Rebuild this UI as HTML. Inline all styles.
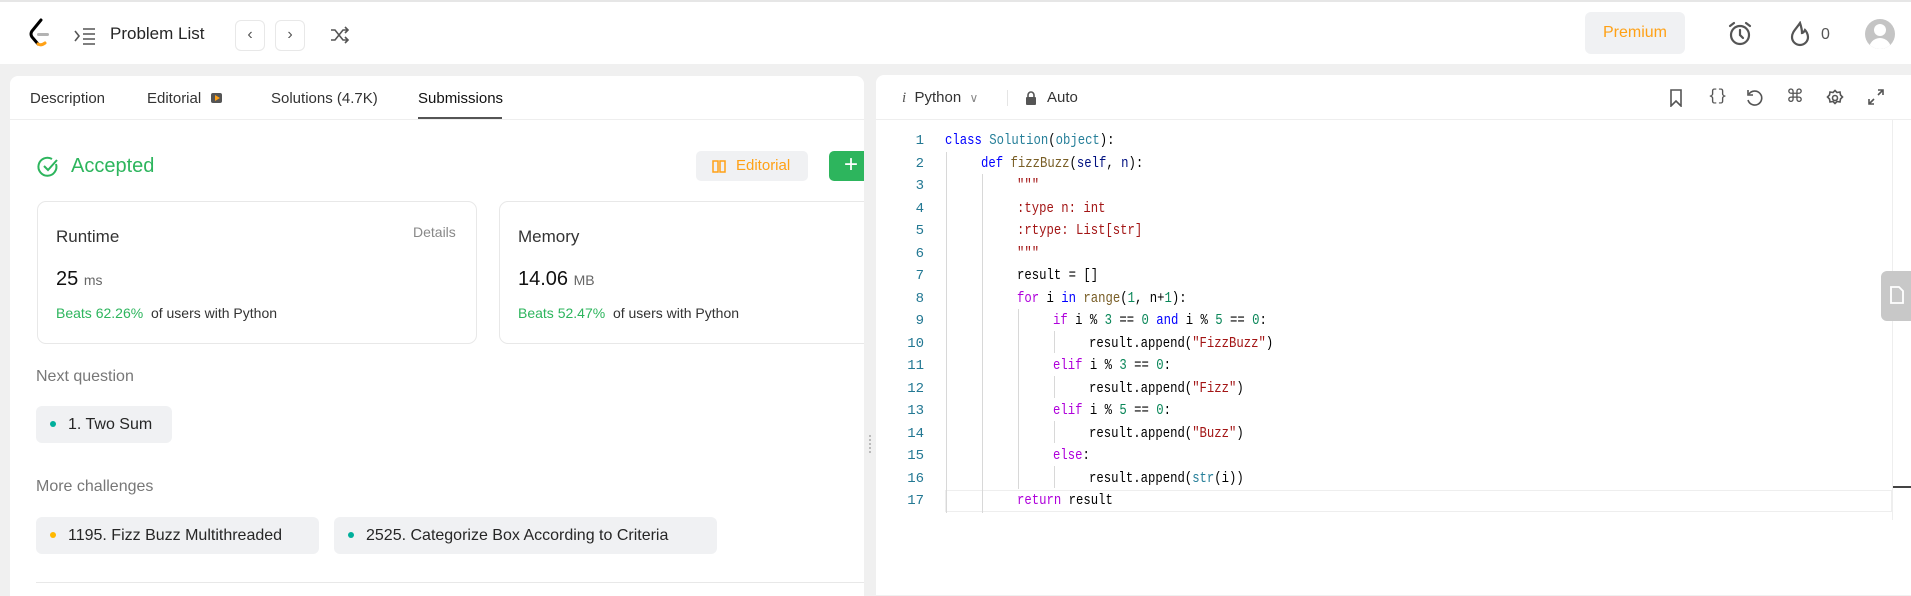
<!DOCTYPE html>
<html><head><meta charset="utf-8"><style>
*{box-sizing:border-box;margin:0;padding:0}
body{width:1911px;height:586px;overflow:hidden;background:#f0f0f0;font-family:"Liberation Sans",sans-serif;position:relative;color:#262626}
.abs{position:absolute}
#nav{left:0;top:0;width:1911px;height:64px;background:#fff;border-top:2px solid #e6e6e6}
.nb{position:absolute;top:18px;width:30px;height:31px;border:1px solid #e8e8e8;border-radius:6px;color:#555;font-size:16px;text-align:center;line-height:28px}
#left{left:10px;top:76px;width:854px;height:520px;background:#fff;border-radius:8px 8px 0 0;overflow:hidden}
#right{left:876px;top:75px;width:1040px;height:520px;background:#fff;border-radius:8px 0 0 0}
.tab{position:absolute;top:14px;font-size:15px;color:#333}
.card{position:absolute;top:125px;height:143px;border:1px solid #e8e8e8;border-radius:9px}
.chip{position:absolute;height:37px;background:#f0f1f3;border-radius:6px;font-size:16px;line-height:37px;padding-left:32px;color:#262626}
.dot{position:absolute;left:14px;top:15px;width:6px;height:6px;border-radius:3px}
.g{color:#2db55d}
.code{position:absolute;font-family:"Liberation Mono",monospace;font-size:14.8px;white-space:pre;color:#000;height:22.5px;line-height:22.5px;transform:scaleX(0.83);transform-origin:0 0}
.ln{position:absolute;left:880px;width:44px;text-align:right;font-family:"Liberation Mono",monospace;font-size:14px;color:#237893;line-height:22.5px}
.k{color:#0000ff}.t{color:#267f99}.f{color:#795e26}.p{color:#001080}.s{color:#a31515}.c{color:#af00db}.n{color:#098658}
.guide{position:absolute;width:1px;background:#d8d8d8}
.ic{position:absolute;top:88px}
</style></head><body>
<div id="nav" class="abs">
 <svg class="abs" style="left:28px;top:16px" width="24" height="30" viewBox="0 0 24 30"><path d="M13 2 L4 13 Q2 16 4 19 L10 26" stroke="#000" stroke-width="3" fill="none" stroke-linecap="round"/><path d="M10 26 Q13 28 17 25" stroke="#ffa116" stroke-width="3" fill="none" stroke-linecap="round"/><rect x="9" y="15" width="12" height="3" rx="1.5" fill="#b3b3b3"/></svg>
 <svg class="abs" style="left:74px;top:25px" width="22" height="18" viewBox="0 0 22 18" stroke="#555" stroke-width="1.6" fill="none"><path d="M1 4 L5 9 L1 14"/><path d="M9 2H21M9 7H21M9 12H21M9 17H21" stroke-width="1.4"/></svg>
 <div class="abs" style="left:110px;top:22px;font-size:17px;color:#262626">Problem List</div>
 <div class="nb" style="left:235px">&#8249;</div>
 <div class="nb" style="left:275px">&#8250;</div>
 <svg class="abs" style="left:330px;top:24px" width="20" height="18" viewBox="0 0 20 18" stroke="#555" stroke-width="1.6" fill="none"><path d="M1 4h4l8 10h5M1 14h4l8-10h5M15 1l3 3-3 3M15 11l3 3-3 3"/></svg>
 <div class="abs" style="left:1585px;top:10px;width:100px;height:42px;background:#f0f1f3;border-radius:6px;color:#ffa116;font-size:16px;text-align:center;line-height:42px">Premium</div>
 <svg class="abs" style="left:1727px;top:19px" width="26" height="26" viewBox="0 0 26 26" stroke="#555" stroke-width="2.2" fill="none"><circle cx="13" cy="14" r="9"/><path d="M13 9v5l3 3M3 5l4-3M23 5l-4-3" stroke-linecap="round"/></svg>
 <svg class="abs" style="left:1789px;top:19px" width="22" height="26" viewBox="0 0 22 26" stroke="#555" stroke-width="2.2" fill="none"><path d="M11 2C7 8 3 11 3 16a8 8 0 0 0 16 0c0-3-2-6-3-7-1 2-2 3-3 3 0-4-1-7-2-10z"/></svg>
 <div class="abs" style="left:1821px;top:24px;font-size:16px;color:#555">0</div>
 <div class="abs" style="left:1865px;top:17px;width:30px;height:30px;border-radius:15px;background:#c4c4c4;overflow:hidden"><div class="abs" style="left:9px;top:5px;width:12px;height:12px;border-radius:6px;background:#fff"></div><div class="abs" style="left:4px;top:19px;width:22px;height:16px;border-radius:11px 11px 0 0;background:#fff"></div></div>
</div>

<div id="left" class="abs">
 <div class="tab" style="left:20px">Description</div>
 <div class="tab" style="left:137px">Editorial <span style="display:inline-block;width:11px;height:10px;background:#555;border-radius:2px;margin-left:6px;position:relative;top:0"><span style="position:absolute;left:4px;top:2px;border-left:5px solid #ffa116;border-top:3px solid transparent;border-bottom:3px solid transparent"></span></span></div>
 <div class="tab" style="left:261px">Solutions (4.7K)</div>
 <div class="tab" style="left:408px;color:#111">Submissions</div>
 <div class="abs" style="left:408px;top:41px;width:84px;height:3px;background:#555"></div>
 <div class="abs" style="left:0;top:43px;width:854px;height:1px;background:#eee"></div>
 <svg class="abs" style="left:26px;top:79px" width="24" height="24" viewBox="0 0 24 24" stroke="#2db55d" stroke-width="2" fill="none"><path d="M20 9a9 9 0 1 1-4-5"/><path d="M8 11l4 4 9-10"/></svg>
 <div class="abs g" style="left:61px;top:79px;font-size:20px">Accepted</div>
 <div class="abs" style="left:686px;top:75px;width:112px;height:30px;background:#f0f1f3;border-radius:5px;color:#ffa116;font-size:15px;line-height:30px;padding-left:40px">Editorial<svg class="abs" style="left:16px;top:8px" width="14" height="14" viewBox="0 0 14 14" stroke="#ffa116" stroke-width="1.5" fill="none"><path d="M1 2h5v11H1zM8 2h5v11H8z"/></svg></div>
 <div class="abs" style="left:819px;top:75px;width:40px;height:30px;background:#2db55d;border-radius:5px;color:#fff;font-size:24px;line-height:28px;padding-left:15px">+</div>
 <div class="card" style="left:27px;width:440px">
  <div class="abs" style="left:18px;top:25px;font-size:17px;color:#333">Runtime</div>
  <div class="abs" style="left:375px;top:22px;font-size:14px;color:#888">Details</div>
  <div class="abs" style="left:18px;top:66px;font-size:20px;color:#111">25 <span style="font-size:14px;color:#666">ms</span></div>
  <div class="abs" style="left:18px;top:103px;font-size:14px;color:#333"><span class="g">Beats 62.26%</span>&nbsp; of users with Python</div>
 </div>
 <div class="card" style="left:489px;width:400px">
  <div class="abs" style="left:18px;top:25px;font-size:17px;color:#333">Memory</div>
  <div class="abs" style="left:18px;top:66px;font-size:20px;color:#111">14.06 <span style="font-size:14px;color:#666">MB</span></div>
  <div class="abs" style="left:18px;top:103px;font-size:14px;color:#333"><span class="g">Beats 52.47%</span>&nbsp; of users with Python</div>
 </div>
 <div class="abs" style="left:26px;top:292px;font-size:16px;color:#777">Next question</div>
 <div class="chip" style="left:26px;top:330px;width:136px"><span class="dot" style="background:#00af9b"></span>1. Two Sum</div>
 <div class="abs" style="left:26px;top:402px;font-size:16px;color:#777">More challenges</div>
 <div class="chip" style="left:26px;top:441px;width:283px"><span class="dot" style="background:#ffb800"></span>1195. Fizz Buzz Multithreaded</div>
 <div class="chip" style="left:324px;top:441px;width:383px"><span class="dot" style="background:#00af9b"></span>2525. Categorize Box According to Criteria</div>
 <div class="abs" style="left:26px;top:506px;width:828px;height:1px;background:#e8e8e8"></div>
</div>

<div id="right" class="abs">
 <div class="abs" style="left:26px;top:14px;font-size:15px;color:#333"><i style="font-family:'Liberation Serif',serif;color:#555">i</i>&nbsp; Python&nbsp; <span style="color:#888;font-size:12px">&#8744;</span></div>
 <div class="abs" style="left:131px;top:15px;width:1px;height:16px;background:#e5e5e5"></div>
 <svg class="abs" style="left:150px;top:16px" width="10" height="14" viewBox="0 0 10 14"><rect x="0" y="6" width="10" height="8" rx="1" fill="#555"/><path d="M2 7V4a3 3 0 0 1 6 0v3" stroke="#555" stroke-width="1.6" fill="none"/></svg>
 <div class="abs" style="left:171px;top:14px;font-size:15px;color:#333">Auto</div>
 <div class="abs" style="left:0;top:44px;width:1040px;height:1px;background:#eee"></div>
</div>
<svg class="ic" style="left:1669px;top:89px" width="14" height="18" viewBox="0 0 14 18" stroke="#555" stroke-width="1.6" fill="none"><path d="M2 1h10v16l-5-5-5 5z"/></svg>
<div class="abs" style="left:1708px;top:87px;font-family:'Liberation Mono',monospace;font-size:16px;color:#555">{}</div>
<svg class="ic" style="left:1745px;top:89px" width="18" height="18" viewBox="0 0 18 18" stroke="#555" stroke-width="1.6" fill="none"><path d="M4 5a7 7 0 1 1-1 6"/><path d="M3 1v5h5"/></svg>
<div class="abs" style="left:1786px;top:86px;font-size:18px;color:#555">&#8984;</div>
<svg class="ic" style="left:1826px;top:89px" width="18" height="18" viewBox="0 0 18 18" stroke="#555" stroke-width="1.6" fill="none"><circle cx="9" cy="9" r="2.5"/><path d="M9 1.5l2 2 3-0.5 0.5 3 2 2-2 2-0.5 3-3-0.5-2 2-2-2-3 0.5-0.5-3-2-2 2-2 0.5-3 3 0.5z"/></svg>
<svg class="ic" style="left:1868px;top:89px" width="16" height="16" viewBox="0 0 16 16" stroke="#555" stroke-width="1.6" fill="none"><path d="M10 1h5v5M15 1l-5 5M6 15H1v-5M1 15l5-5"/></svg>

<div class="abs" style="left:945px;top:490px;width:947px;height:22px;border:1px solid #eee"></div>
<div class="guide" style="left:946px;top:152px;height:361px"></div>
<div class="guide" style="left:982px;top:174px;height:339px"></div>
<div class="guide" style="left:1018px;top:309px;height:180px"></div>
<div class="guide" style="left:1054px;top:331px;height:22px"></div>
<div class="guide" style="left:1054px;top:376px;height:22px"></div>
<div class="guide" style="left:1054px;top:421px;height:22px"></div>
<div class="guide" style="left:1054px;top:466px;height:22px"></div>
<div class="abs" style="left:1892px;top:120px;width:1px;height:400px;background:#eee"></div>
<div class="abs" style="left:1893px;top:486px;width:18px;height:2px;background:#444"></div>
<div class="abs" style="left:1881px;top:271px;width:30px;height:50px;background:#c8c8c8;border-radius:6px 0 0 6px"><svg class="abs" style="left:9px;top:15px" width="14" height="18" viewBox="0 0 14 18" stroke="#fff" stroke-width="1.8" fill="none"><path d="M1 1h8l4 4v12H1z"/></svg></div>

<div class="ln" style="top:130px">1<br>2<br>3<br>4<br>5<br>6<br>7<br>8<br>9<br>10<br>11<br>12<br>13<br>14<br>15<br>16<br>17</div>
<div class="code" style="top:130px;left:945px"><span class="k">class</span> <span class="t">Solution</span>(<span class="t">object</span>):</div>
<div class="code" style="top:152.5px;left:981px"><span class="k">def</span> <span class="f">fizzBuzz</span>(<span class="p">self</span>, <span class="p">n</span>):</div>
<div class="code" style="top:175px;left:1017px"><span class="s">"""</span></div>
<div class="code" style="top:197.5px;left:1017px"><span class="s">:type n: int</span></div>
<div class="code" style="top:220px;left:1017px"><span class="s">:rtype: List[str]</span></div>
<div class="code" style="top:242.5px;left:1017px"><span class="s">"""</span></div>
<div class="code" style="top:265px;left:1017px">result = []</div>
<div class="code" style="top:287.5px;left:1017px"><span class="c">for</span> i <span class="k">in</span> <span class="f">range</span>(<span class="n">1</span>, n+<span class="n">1</span>):</div>
<div class="code" style="top:310px;left:1053px"><span class="c">if</span> i % <span class="n">3</span> == <span class="n">0</span> <span class="k">and</span> i % <span class="n">5</span> == <span class="n">0</span>:</div>
<div class="code" style="top:332.5px;left:1089px">result.append(<span class="s">"FizzBuzz"</span>)</div>
<div class="code" style="top:355px;left:1053px"><span class="c">elif</span> i % <span class="n">3</span> == <span class="n">0</span>:</div>
<div class="code" style="top:377.5px;left:1089px">result.append(<span class="s">"Fizz"</span>)</div>
<div class="code" style="top:400px;left:1053px"><span class="c">elif</span> i % <span class="n">5</span> == <span class="n">0</span>:</div>
<div class="code" style="top:422.5px;left:1089px">result.append(<span class="s">"Buzz"</span>)</div>
<div class="code" style="top:445px;left:1053px"><span class="c">else</span>:</div>
<div class="code" style="top:467.5px;left:1089px">result.append(<span class="t">str</span>(i))</div>
<div class="code" style="top:490px;left:1017px"><span class="c">return</span> result</div>
<div class="abs" style="left:869px;top:435px;width:2px;height:18px;border-left:2px dotted #bbb"></div>
</body></html>
